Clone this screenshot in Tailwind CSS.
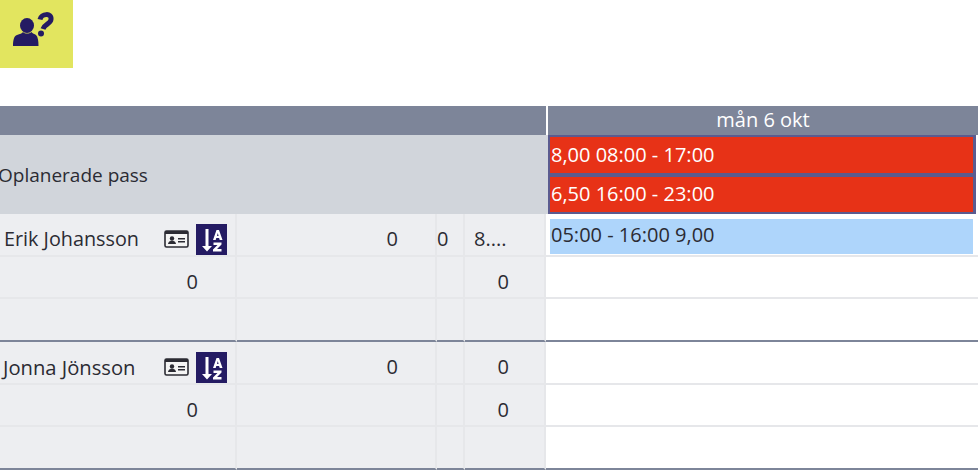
<!DOCTYPE html>
<html lang="en">

<head>
  <title>Schema</title>
  <script src="https://cdn.jsdelivr.net/npm/@tailwindcss/browser@4"></script>
</head>

<body class="bg-white h-[475px] overflow-hidden font-['Open_Sans','Noto_Sans',sans-serif] text-[20px] text-[#2b2b33]">
  <div class="h-[106px]">
    <svg viewBox="0 0 73 68" class="w-[73px] h-[68px] block bg-[#e2e55f]" fill="#241b63">
      <ellipse cx="27" cy="25.500" rx="7" ry="7.500" />
      <path d="M13 46c0-6 1-10 4-11 3-1 5-1.500 6-3 2 2 6 2 8.500 0 1 1.500 3 2 4.500 3 2 2 2.500 6 2.500 11z" />
      <path d="M40 19.500C41 14 52 12 51 19.500 50.500 24 44.500 24 43 29" fill="none" stroke="#241b63" stroke-width="5" />
      <circle cx="41" cy="33.500" r="3" />
    </svg>
  </div>

  <div class="grid grid-cols-[546px_2px_430px] h-[29px] text-white">
    <div class="bg-[#7d8599]"></div>
    <div></div>
    <div class="bg-[#7d8599] text-center leading-[27px]">mån 6 okt</div>
  </div>

  <div class="grid grid-cols-[548px_428px_2px]">
    <div class="bg-[#d1d5db] h-[79px] flex items-center text-[19px] overflow-hidden"><span class="-ml-[2px] pt-[1px]">Oplanerade pass</span></div>
    <div class="bg-[#5b5b8f] h-[79px] p-[2px] pr-[3px] flex flex-col gap-[4px] text-white">
      <div class="bg-[#e73217] h-[36px] leading-[35px] pl-[1px]">8,00 08:00 - 17:00</div>
      <div class="bg-[#e73217] h-[35px] leading-[33px] pl-[1px]">6,50 16:00 - 23:00</div>
    </div>
  </div>

  <div class="grid grid-cols-[237px_200px_28px_81px_432px] grid-rows-[43px_42px_43px_43px_42px_43px]">
    <div class="bg-[#edeef1] border-r-2 border-b-2 border-[#e6e7ea] flex items-center justify-between pt-[9px] pl-1 pr-[8px]">
      <span class="text-[19.800px]">Erik Johansson</span>
      <span class="flex items-center gap-[7px]">
        <svg viewBox="0 0 25 18" class="w-[25px] h-[18px]">
          <rect x="1" y="1" width="23" height="16" rx="1.500" fill="#f4f4f4" stroke="#2b2b33" stroke-width="1.600" />
          <rect x="1" y="1" width="23" height="3" fill="#2b2b33" />
          <circle cx="8" cy="8.500" r="2.200" fill="#2b2b33" />
          <path d="M4 14c0-4.500 8-4.500 8 0z" fill="#2b2b33" />
          <path d="M14 8h7v1.500h-7zM14 11h7v1.500h-7z" fill="#2b2b33" />
        </svg>
        <svg viewBox="0 0 31 31" class="w-[31px] h-[31px]">
          <rect width="31" height="31" fill="#241b63" />
          <path d="M9.500 5h3v17h3.500l-5 5.500-5-5.500h3.500z" fill="#fff" />
          <path d="M17 16l3.500-10h2.500l3.500 10h-2.800l-.6-2h-2.800l-.6 2zM21 12h1.600l-.8-3z" fill="#fff" fill-rule="evenodd" />
          <path d="M17.500 18.500h8v2l-4.500 4.500h4.500v2.500h-8.500v-2l4.500-4.500h-4z" fill="#fff" />
        </svg>
      </span>
    </div>
    <div class="bg-[#edeef1] border-r-2 border-b-2 border-[#e6e7ea] flex items-center justify-end pt-[9px] pr-[37px]">0</div>
    <div class="bg-[#edeef1] border-r-2 border-b-2 border-[#e6e7ea] flex items-center pt-[9px]">0</div>
    <div class="bg-[#edeef1] border-r-2 border-b-2 border-[#e6e7ea] flex items-center pt-[9px] pl-[9px]">8....</div>
    <div class="border-b-2 border-[#e6e7ea] pl-[4px] pr-[5px] pt-[5px]">
      <div class="bg-[#aed5fb] h-[35px] leading-[32px] pl-[1px]">05:00 - 16:00 9,00</div>
    </div>

    <div class="bg-[#edeef1] border-r-2 border-b-2 border-[#e6e7ea] flex items-center justify-end pt-[9px] pr-[37px]">0</div>
    <div class="bg-[#edeef1] border-r-2 border-b-2 border-[#e6e7ea]"></div>
    <div class="bg-[#edeef1] border-r-2 border-b-2 border-[#e6e7ea]"></div>
    <div class="bg-[#edeef1] border-r-2 border-b-2 border-[#e6e7ea] flex items-center justify-end pt-[9px] pr-[35px]">0</div>
    <div class="border-b-2 border-[#e6e7ea]"></div>

    <div class="bg-[#edeef1] border-r-2 border-r-[#e6e7ea] border-b-2 border-b-[#7d8599]"></div>
    <div class="bg-[#edeef1] border-r-2 border-r-[#e6e7ea] border-b-2 border-b-[#7d8599]"></div>
    <div class="bg-[#edeef1] border-r-2 border-r-[#e6e7ea] border-b-2 border-b-[#7d8599]"></div>
    <div class="bg-[#edeef1] border-r-2 border-r-[#e6e7ea] border-b-2 border-b-[#7d8599]"></div>
    <div class="border-b-2 border-[#7d8599]"></div>

    <div class="bg-[#edeef1] border-r-2 border-b-2 border-[#e6e7ea] flex items-center justify-between pt-[9px] pl-[3px] pr-[8px]">
      <span class="text-[20.200px]">Jonna Jönsson</span>
      <span class="flex items-center gap-[7px]">
        <svg viewBox="0 0 25 18" class="w-[25px] h-[18px]">
          <rect x="1" y="1" width="23" height="16" rx="1.500" fill="#f4f4f4" stroke="#2b2b33" stroke-width="1.600" />
          <rect x="1" y="1" width="23" height="3" fill="#2b2b33" />
          <circle cx="8" cy="8.500" r="2.200" fill="#2b2b33" />
          <path d="M4 14c0-4.500 8-4.500 8 0z" fill="#2b2b33" />
          <path d="M14 8h7v1.500h-7zM14 11h7v1.500h-7z" fill="#2b2b33" />
        </svg>
        <svg viewBox="0 0 31 31" class="w-[31px] h-[31px]">
          <rect width="31" height="31" fill="#241b63" />
          <path d="M9.500 5h3v17h3.500l-5 5.500-5-5.500h3.500z" fill="#fff" />
          <path d="M17 16l3.500-10h2.500l3.500 10h-2.800l-.6-2h-2.800l-.6 2zM21 12h1.600l-.8-3z" fill="#fff" fill-rule="evenodd" />
          <path d="M17.500 18.500h8v2l-4.500 4.500h4.500v2.500h-8.500v-2l4.500-4.500h-4z" fill="#fff" />
        </svg>
      </span>
    </div>
    <div class="bg-[#edeef1] border-r-2 border-b-2 border-[#e6e7ea] flex items-center justify-end pt-[9px] pr-[37px]">0</div>
    <div class="bg-[#edeef1] border-r-2 border-b-2 border-[#e6e7ea]"></div>
    <div class="bg-[#edeef1] border-r-2 border-b-2 border-[#e6e7ea] flex items-center justify-end pt-[9px] pr-[35px]">0</div>
    <div class="border-b-2 border-[#e6e7ea]"></div>

    <div class="bg-[#edeef1] border-r-2 border-b-2 border-[#e6e7ea] flex items-center justify-end pt-[9px] pr-[37px]">0</div>
    <div class="bg-[#edeef1] border-r-2 border-b-2 border-[#e6e7ea]"></div>
    <div class="bg-[#edeef1] border-r-2 border-b-2 border-[#e6e7ea]"></div>
    <div class="bg-[#edeef1] border-r-2 border-b-2 border-[#e6e7ea] flex items-center justify-end pt-[9px] pr-[35px]">0</div>
    <div class="border-b-2 border-[#e6e7ea]"></div>

    <div class="bg-[#edeef1] border-r-2 border-r-[#e6e7ea] border-b-2 border-b-[#7d8599]"></div>
    <div class="bg-[#edeef1] border-r-2 border-r-[#e6e7ea] border-b-2 border-b-[#7d8599]"></div>
    <div class="bg-[#edeef1] border-r-2 border-r-[#e6e7ea] border-b-2 border-b-[#7d8599]"></div>
    <div class="bg-[#edeef1] border-r-2 border-r-[#e6e7ea] border-b-2 border-b-[#7d8599]"></div>
    <div class="border-b-2 border-[#7d8599]"></div>
  </div>
</body>

</html>
